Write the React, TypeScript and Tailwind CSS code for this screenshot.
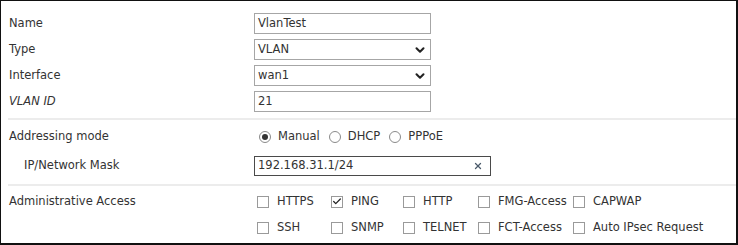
import { Check, ChevronDown, X } from "lucide-react";

type CheckItem = { label: string; checked?: boolean; w: string };

const row1: CheckItem[] = [
  { label: "HTTPS", w: "w-[74px]" },
  { label: "PING", checked: true, w: "w-[72px]" },
  { label: "HTTP", w: "w-[75px]" },
  { label: "FMG-Access", w: "w-[95px]" },
  { label: "CAPWAP", w: "w-auto" },
];

const row2: CheckItem[] = [
  { label: "SSH", w: "w-[74px]" },
  { label: "SNMP", w: "w-[72px]" },
  { label: "TELNET", w: "w-[75px]" },
  { label: "FCT-Access", w: "w-[95px]" },
  { label: "Auto IPsec Request", w: "w-auto" },
];

function Box({ item }: { item: CheckItem }) {
  return (
    <div className={`flex items-center ${item.w}`}>
      <span className="flex h-[12px] w-[12px] items-center justify-center border border-[#9a9a9a] bg-white">
        {item.checked && <Check className="h-[11px] w-[11px] text-[#222]" strokeWidth={3} />}
      </span>
      <span className="ml-[8px]">{item.label}</span>
    </div>
  );
}

function Radio({ label, on }: { label: string; on?: boolean }) {
  return (
    <div className="flex items-center">
      <span className="flex h-[12px] w-[12px] items-center justify-center rounded-full border border-[#8a8a8a] bg-white">
        {on && <span className="h-[6px] w-[6px] rounded-full bg-[#333]" />}
      </span>
      <span className="ml-[7px] mr-[9px]">{label}</span>
    </div>
  );
}

function Field({ label, italic, indent, children }: { label: string; italic?: boolean; indent?: boolean; children: React.ReactNode }) {
  return (
    <div className="flex h-[21px] items-center">
      <div className={`w-[245px] ${italic ? "italic" : ""} ${indent ? "pl-[15px]" : ""}`}>{label}</div>
      {children}
    </div>
  );
}

export default function App() {
  return (
    <div className="h-[245px] w-[738px] border-t border-l border-r-2 border-b-2 border-[#111] bg-white font-['DejaVu_Sans',sans-serif] text-[11.5px] text-[#333]">
      {/* basic */}
      <div className="flex flex-col gap-[5px] pl-[8px] pt-[12px]">
        <Field label="Name">
          <div className="flex h-[21px] w-[177px] items-center border border-[#a6a6a6] px-[3px]">VlanTest</div>
        </Field>
        <Field label="Type">
          <div className="flex h-[21px] w-[177px] items-center justify-between border border-[#a6a6a6] px-[3px]">
            <span>VLAN</span>
            <ChevronDown className="h-[14px] w-[14px] text-[#222]" strokeWidth={3.5} />
          </div>
        </Field>
        <Field label="Interface">
          <div className="flex h-[21px] w-[177px] items-center justify-between border border-[#a6a6a6] px-[3px]">
            <span>wan1</span>
            <ChevronDown className="h-[14px] w-[14px] text-[#222]" strokeWidth={3.5} />
          </div>
        </Field>
        <Field label="VLAN ID" italic>
          <div className="flex h-[21px] w-[177px] items-center border border-[#a6a6a6] px-[3px]">21</div>
        </Field>
      </div>

      <div className="ml-[7px] mt-[6px] h-[2px] bg-[#ececec]" />

      {/* addressing */}
      <div className="flex flex-col gap-[8px] pl-[8px] pt-[6px]">
        <Field label="Addressing mode">
          <div className="flex items-center pl-[5px]">
            <Radio label="Manual" on />
            <Radio label="DHCP" />
            <Radio label="PPPoE" />
          </div>
        </Field>
        <Field label="IP/Network Mask" indent>
          <div className="flex h-[20px] w-[237px] items-center justify-between border border-[#4a4a4a] px-[3px]">
            <span>192.168.31.1/24</span>
            <X className="mr-[4px] h-[10px] w-[10px] text-[#4b5a6a]" strokeWidth={3} />
          </div>
        </Field>
      </div>

      <div className="ml-[7px] mt-[8px] h-[2px] bg-[#ececec]" />

      {/* access */}
      <div className="flex pl-[8px] pt-[5px]">
        <div className="flex h-[21px] w-[245px] items-center">Administrative Access</div>
        <div className="flex flex-col gap-[5px] pl-[3px]">
          <div className="flex h-[21px] items-center">
            {row1.map((i) => (
              <Box key={i.label} item={i} />
            ))}
          </div>
          <div className="flex h-[21px] items-center">
            {row2.map((i) => (
              <Box key={i.label} item={i} />
            ))}
          </div>
        </div>
      </div>
    </div>
  );
}
